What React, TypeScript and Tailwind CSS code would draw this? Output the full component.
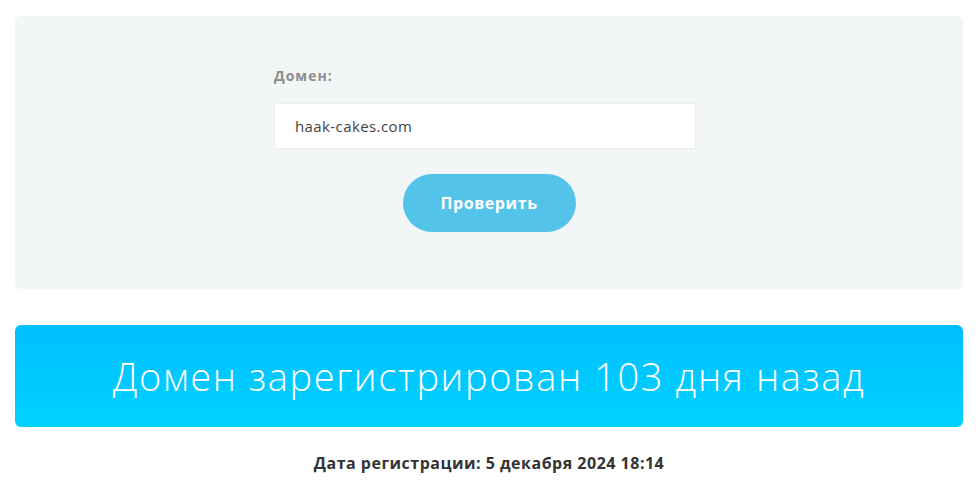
export default function App() {
  return (
    <div className="w-[978px] h-[488px] bg-white px-[15px] pt-[16px]" style={{ fontFamily: '"Open Sans", "Noto Sans", sans-serif' }}>
      <div className="h-[273px] bg-[#f3f6f7] rounded-[6px] flex flex-col items-center pt-[50px]">
        <div className="w-[422px] mr-[8px]">
          <div className="text-[14px] font-bold text-[#8c8c8c] leading-[20px] tracking-[1px]">Домен:</div>
          <div className="mt-[17px] h-[46px] bg-white border border-[#eceff0] flex items-center pl-[20px] text-[15px] tracking-[0.4px] text-[#444]">haak-cakes.com</div>
        </div>
        <button className="mt-[25px] w-[173px] h-[58px] rounded-full bg-[#54c3ea] text-white font-bold text-[16px] tracking-[0.6px]">Проверить</button>
      </div>
      <div className="mt-[36px] h-[102px] rounded-[6px] bg-gradient-to-b from-[#00bfff] to-[#00d2ff] flex items-center justify-center text-white text-[38px] font-light tracking-[1.6px]">
        Домен зарегистрирован 103 дня назад
      </div>
      <div className="mt-[24px] text-center text-[16px] font-bold tracking-[0.5px] text-[#333]">Дата регистрации: 5 декабря 2024 18:14</div>
    </div>
  );
}
